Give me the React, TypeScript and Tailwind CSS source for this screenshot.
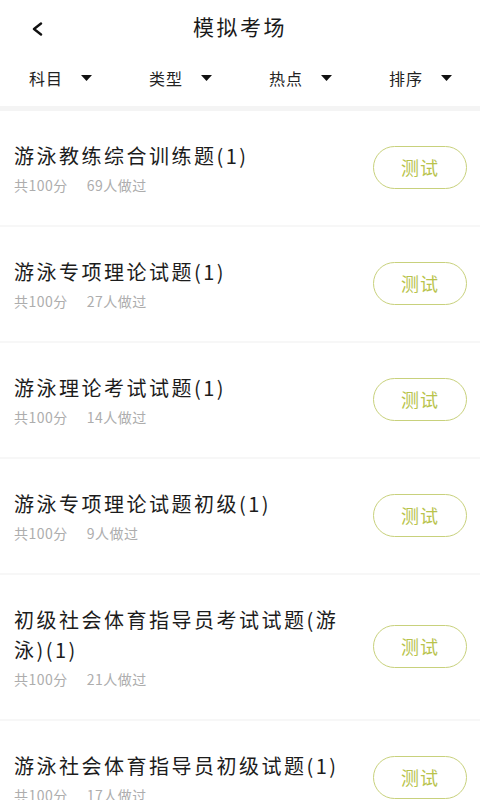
import React from "react";

const filters = ["科目", "类型", "热点", "排序"];

const exams = [
  { title: "游泳教练综合训练题(1)", score: 100, count: 69 },
  { title: "游泳专项理论试题(1)", score: 100, count: 27 },
  { title: "游泳理论考试试题(1)", score: 100, count: 14 },
  { title: "游泳专项理论试题初级(1)", score: 100, count: 9 },
  { title: "初级社会体育指导员考试试题(游泳)(1)", score: 100, count: 21 },
  { title: "游泳社会体育指导员初级试题(1)", score: 100, count: 17 },
];

const Caret = () => (
  <svg width="11" height="6" viewBox="0 0 11 6" className="ml-[18px]">
    <path d="M0 0 H11 L5.5 6 Z" fill="#111" />
  </svg>
);

const App = () => {
  return (
    <div
      className="min-h-[800px] w-[480px] overflow-hidden bg-white"
      style={{ fontFamily: '"Noto Sans CJK SC", "Noto Sans", sans-serif' }}
    >
      {/* Header */}
      <div className="relative flex h-[52px] items-center justify-center">
        <button className="absolute left-[31px] top-[22px] flex h-[14px] w-[12px] items-center">
          <svg width="12" height="14" viewBox="0 0 12 14">
            <path
              d="M10 1.5 L3 7 L10 12.5"
              fill="none"
              stroke="#111"
              strokeWidth="2.4"
              strokeLinecap="round"
              strokeLinejoin="round"
            />
          </svg>
        </button>
        <h1 className="text-[21px] leading-none tracking-[2.5px] text-[#1a1a1a]">模拟考场</h1>
      </div>

      {/* Filters */}
      <div className="grid h-[52px] grid-cols-4">
        {filters.map((f) => (
          <div key={f} className="flex items-center pl-[29px]">
            <span className="text-[16px] leading-none tracking-[1px] text-[#222]">{f}</span>
            <Caret />
          </div>
        ))}
      </div>
      <div className="mt-[2px] h-[5px] bg-[#f4f4f4]" />

      {/* List */}
      <div>
        {exams.map((e, i) => (
          <div key={i}>
            {i > 0 && <div className="h-[2px] bg-[#f7f7f7]" />}
            <div className="flex items-center pl-[14px] pr-[13px] pt-[30px] pb-[31px]">
              <div className="w-[331px]">
                <p className="text-[20px] leading-[30px] tracking-[2.5px] text-[#1c1c1c]">{e.title}</p>
                <div className="mt-[5px] flex gap-[19px] text-[14px] leading-[18px] tracking-[0.5px] text-[#adadad]">
                  <span>共{e.score}分</span>
                  <span>{e.count}人做过</span>
                </div>
              </div>
              <button className="ml-auto flex h-[43px] w-[94px] items-center justify-center rounded-full border-[1.5px] border-[#c8d17c] text-[18px] tracking-[1px] text-[#b8c34c]">
                测试
              </button>
            </div>
          </div>
        ))}
      </div>
    </div>
  );
};

export default App;
